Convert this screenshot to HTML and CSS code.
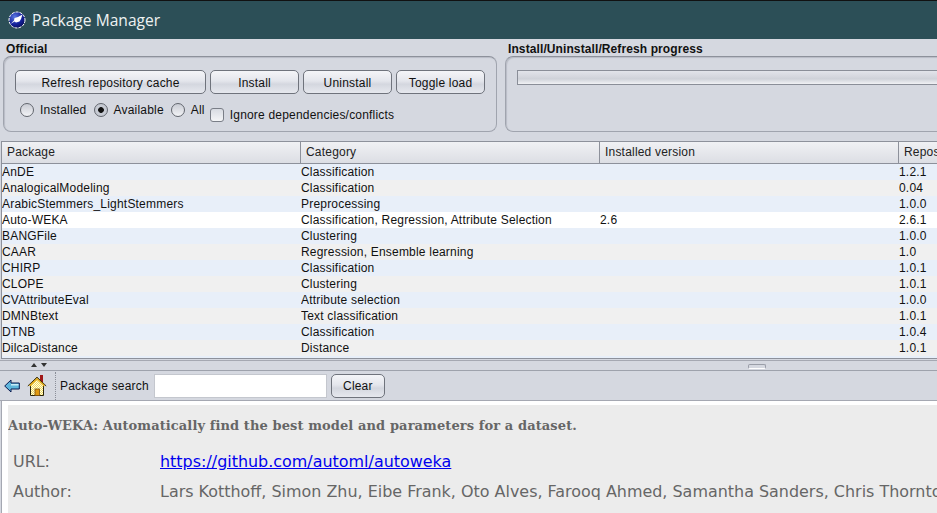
FILE: index.html
```html
<!DOCTYPE html>
<html lang="en">
<head>
<meta charset="utf-8">
<title>Package Manager</title>
<link rel="stylesheet" href="styles.css">
</head>
<body>
<div class="app">
  <header class="titlebar">
    <svg class="logo" width="18" height="18" viewBox="0 0 18 18"><defs><radialGradient id="g" cx=".35" cy=".3" r=".8"><stop offset="0" stop-color="#5a78e0"/><stop offset=".6" stop-color="#14209a"/><stop offset="1" stop-color="#080c50"/></radialGradient></defs><circle cx="9" cy="9" r="8" fill="url(#g)" stroke="#fff" stroke-width="1" stroke-dasharray="3 1"/><path d="M2.500 13 L6 9.500 L6.500 7 L10 6 L14.500 3.500 L13 8 L11.500 10.500 L8 11.500 L6.500 10.500 Z" fill="#fff"/></svg>
    <span class="title">Package Manager</span>
  </header>
  <section class="top">
    <div class="group group-left">
      <div class="group-label">Official</div>
      <div class="panel">
        <div class="btn-row">
          <button class="btn btn-refresh">Refresh repository cache</button>
          <button class="btn btn-std">Install</button>
          <button class="btn btn-std">Uninstall</button>
          <button class="btn btn-std">Toggle load</button>
        </div>
        <div class="opt-row">
          <label class="radio"><span class="dot"></span>Installed</label>
          <label class="radio"><span class="dot on"></span>Available</label>
          <label class="radio"><span class="dot"></span>All</label>
          <label class="check"><span class="box"></span>Ignore dependencies/conflicts</label>
        </div>
      </div>
    </div>
    <div class="group group-right">
      <div class="group-label">Install/Uninstall/Refresh progress</div>
      <div class="panel panel-open"><div class="progress"></div></div>
    </div>
  </section>
  <section class="table">
    <div class="row head">
      <div class="c1">Package</div><div class="c2">Category</div><div class="c3">Installed version</div><div class="c4">Repository version</div>
    </div>
    <div class="row"><div class="c1">AnDE</div><div class="c2">Classification</div><div class="c3"></div><div class="c4">1.2.1</div></div>
    <div class="row"><div class="c1">AnalogicalModeling</div><div class="c2">Classification</div><div class="c3"></div><div class="c4">0.04</div></div>
    <div class="row"><div class="c1">ArabicStemmers_LightStemmers</div><div class="c2">Preprocessing</div><div class="c3"></div><div class="c4">1.0.0</div></div>
    <div class="row sel"><div class="c1">Auto-WEKA</div><div class="c2">Classification, Regression, Attribute Selection</div><div class="c3">2.6</div><div class="c4">2.6.1</div></div>
    <div class="row"><div class="c1">BANGFile</div><div class="c2">Clustering</div><div class="c3"></div><div class="c4">1.0.0</div></div>
    <div class="row"><div class="c1">CAAR</div><div class="c2">Regression, Ensemble learning</div><div class="c3"></div><div class="c4">1.0</div></div>
    <div class="row"><div class="c1">CHIRP</div><div class="c2">Classification</div><div class="c3"></div><div class="c4">1.0.1</div></div>
    <div class="row"><div class="c1">CLOPE</div><div class="c2">Clustering</div><div class="c3"></div><div class="c4">1.0.1</div></div>
    <div class="row"><div class="c1">CVAttributeEval</div><div class="c2">Attribute selection</div><div class="c3"></div><div class="c4">1.0.0</div></div>
    <div class="row"><div class="c1">DMNBtext</div><div class="c2">Text classification</div><div class="c3"></div><div class="c4">1.0.1</div></div>
    <div class="row"><div class="c1">DTNB</div><div class="c2">Classification</div><div class="c3"></div><div class="c4">1.0.4</div></div>
    <div class="row"><div class="c1">DilcaDistance</div><div class="c2">Distance</div><div class="c3"></div><div class="c4">1.0.1</div></div>
  </section>
  <div class="splitter">
    <span class="arrows"><i class="up"></i><i class="down"></i></span>
    <span class="grip"></span>
  </div>
  <div class="toolbar">
    <svg class="ico-back" width="16" height="14" viewBox="0 0 16 14"><path d="M0.700 7 L7 1 L7 4 L15.300 4 L15.300 10 L7 10 L7 13 Z" fill="#5fb6dc" stroke="#0a1a50" stroke-width="1"/><path d="M7 5 H14.500 V6.500 H7 Z" fill="#c8ecf8"/></svg>
    <svg class="ico-home" width="20" height="21" viewBox="0 0 20 21"><defs><pattern id="chk" width="2" height="2" patternUnits="userSpaceOnUse"><rect width="2" height="2" fill="#fffde0"/><rect width="1" height="1" fill="#f0d860"/><rect x="1" y="1" width="1" height="1" fill="#f0d860"/></pattern></defs><rect x="13" y="0" width="3" height="7" fill="#a01818"/><path d="M3.500 9.500 L10 3.500 L16.500 9.500 V20.500 H3.500 Z" fill="url(#chk)" stroke="#2a2408"/><path d="M0.800 11 L10 2.200 L19.200 11" fill="none" stroke="#2a2408" stroke-width="1"/><path d="M2.500 10.800 L10 3.800 L17.500 10.800" fill="none" stroke="#e8b020" stroke-width="1.600"/><rect x="8" y="14" width="4.500" height="6.500" fill="#e09810" stroke="#7a5010" stroke-width=".8"/></svg>
    <span class="sep"></span>
    <span class="search-label">Package search</span>
    <input class="search" type="text" aria-label="Package search">
    <button class="btn btn-clear">Clear</button>
  </div>
  <section class="detail">
    <div class="detail-inner">
      <h1 class="d-title">Auto-WEKA: Automatically find the best model and parameters for a dataset.</h1>
      <div class="d-row"><span class="d-key">URL:</span><a class="d-link" href="#">https://github.com/automl/autoweka</a></div>
      <div class="d-row"><span class="d-key">Author:</span><span class="d-val">Lars Kotthoff, Simon Zhu, Eibe Frank, Oto Alves, Farooq Ahmed, Samantha Sanders, Chris Thornton, Frank Hutter</span></div>
    </div>
  </section>
</div>
</body>
</html>
```
FILE: styles.css
```css
* { box-sizing: border-box; }
html, body { margin: 0; height: 100%; overflow: hidden; }
body { background: #d5d8e0; font-family: "Liberation Sans", Arial, sans-serif; font-size: 12px; letter-spacing: .2px; color: #111; }
.app { width: 937px; height: 513px; overflow: hidden; display: flex; flex-direction: column; }

.titlebar { height: 39px; flex: none; background: #2c4f57; border-top: 1px solid #111; display: flex; align-items: center; padding-left: 8px; }
.logo { flex: none; }
.title { margin-left: 6px; color: #eef2f2; font-family: "Open Sans", sans-serif; font-size: 15.6px; letter-spacing: 0; }

.top { height: 95px; flex: none; display: flex; padding-left: 3px; gap: 8px; }
.group { display: flex; flex-direction: column; }
.group-left { width: 494px; flex: none; }
.group-right { width: 450px; flex: none; }
.group-label { font-weight: bold; height: 17px; line-height: 20px; padding-left: 3px; flex: none; letter-spacing: .1px; }
.panel { height: 76px; border: 1px solid #a0a4ae; border-top-color: #8d919b; border-radius: 8px; box-shadow: inset 1px 1px 1px #b9bcc6; padding: 13px 11px 0; }
.panel-open { border-right: 0; border-radius: 8px 0 0 8px; padding-right: 0; }
.btn-row { display: flex; gap: 4px; }
.btn { height: 24px; padding: 2px 0 0; border: 1px solid #6f737c; border-radius: 5px; background: linear-gradient(#f4f5f8 0%, #e4e6ec 45%, #d4d7df 60%, #e6e8ee 100%); font: 12px "Liberation Sans", Arial, sans-serif; letter-spacing: .2px; color: #111; }
.btn-refresh { width: 191px; }
.btn-std { width: 89px; }
.opt-row { display: flex; align-items: flex-start; margin-top: 8px; padding-left: 5px; }
.radio { display: flex; align-items: center; height: 16px; margin-right: 7px; line-height: 19px; }
.dot { width: 14px; height: 14px; border-radius: 50%; border: 1px solid #62666e; background: linear-gradient(#c9ccd4, #f2f3f6); margin-right: 6px; display: flex; align-items: center; justify-content: center; }
.dot.on { background: radial-gradient(circle, #111 0 2.500px, #c6cad3 3.200px); }
.check { display: flex; align-items: center; height: 16px; margin-top: 5px; margin-left: -2px; line-height: 18px; }
.box { width: 14px; height: 14px; border: 1px solid #7a7e87; border-radius: 3px; background: linear-gradient(#d8dbe2, #f4f5f7); margin-right: 6px; }
.progress { width: 100%; height: 15px; border: 1px solid #8a8e98; background: linear-gradient(#e2e4ea 0%, #d6d8df 40%, #cfd2d9 60%, #f0f1f4 100%); }

.table { margin: 7px 0 0 1px; flex: none; height: 218px; border: 1px solid #8d919b; border-right: 0; background: #e8eff9; overflow: hidden; }
.row { display: flex; height: 16px; line-height: 16px; white-space: nowrap; }
.row:nth-child(odd) { background: #f0f0f0; }
.row.sel { background: #fff; }
.row > div { flex: none; overflow: hidden; }
.c1 { width: 299px; }
.c2 { width: 299px; }
.c3 { width: 299px; }
.c4 { width: 60px; }
.row.head { height: 22px; line-height: 21px; background: linear-gradient(#f0f1f4, #dcdee4); border-bottom: 1px solid #8d919b; }
.head > div { padding-left: 5px; border-right: 1px solid #8d919b; color: #222; }
.head .c4 { border-right: 0; }

.splitter { position: relative; flex: none; height: 11px; margin-top: 1px; border-top: 1px solid #a5a8b2; border-bottom: 1px solid #9ea2ac; }
.arrows { position: absolute; left: 31px; top: 2px; display: flex; gap: 4px; }
.arrows i { width: 0; height: 0; border-left: 3.500px solid transparent; border-right: 3.500px solid transparent; }
.arrows .up { border-bottom: 4px solid #333; }
.arrows .down { border-top: 4px solid #333; }
.grip { position: absolute; left: 748px; top: 3px; width: 18px; height: 5px; border: 1px solid #9a9ea8; border-radius: 2px; border-bottom-color: #fff; background: #d5d8e0; }

.toolbar { flex: none; height: 30px; display: flex; align-items: center; border-bottom: 1px solid #a5a8b2; padding-left: 4px; }
.ico-back { flex: none; }
.ico-home { flex: none; margin-left: 7px; }
.sep { width: 0; height: 28px; border-left: 1px dotted #8a8e98; margin-left: 8px; }
.search-label { margin-left: 4px; }
.search { width: 173px; height: 24px; margin-left: 5px; border: 1px solid #c4c7ce; background: #fff; padding: 0; }
.btn-clear { width: 54px; height: 24px; margin-left: 4px; padding-top: 0; }

.detail { flex: 1; background: #fff; margin-left: 1px; border-left: 1px solid #a5a8b2; padding: 4px 0 0 6px; overflow: hidden; }
.detail-inner { background: #ececec; height: 120px; color: #666; overflow: hidden; white-space: nowrap; letter-spacing: 0; }
.d-title { margin: 0; font: bold 13px "DejaVu Serif", serif; letter-spacing: .1px; height: 42px; line-height: 42px; color: #666; }
.d-row { display: flex; font: 15.95px/30px "DejaVu Sans", sans-serif; padding-left: 5px; height: 30px; }
.d-key { width: 147px; flex: none; }
.d-link { color: #0000ee; text-decoration: underline; }
```
